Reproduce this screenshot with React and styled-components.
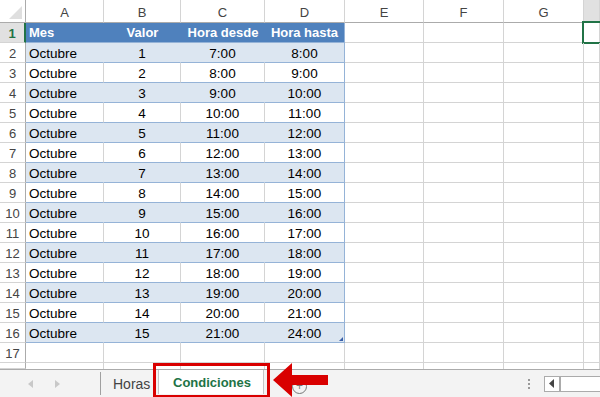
import React from 'react';
import styled, { createGlobalStyle, css } from 'styled-components';

const GlobalStyle = createGlobalStyle`
  html, body { margin: 0; padding: 0; background: #fff; }
  body { font-family: "Liberation Sans", Arial, sans-serif; }
`;

const widths = [26, 78, 77, 84, 80, 79, 80, 80, 16];
const letters = ['A', 'B', 'C', 'D', 'E', 'F', 'G', ''];

const rows = Array.from({ length: 15 }, (_, i) => {
  const v = i + 1;
  const from = v === 15 ? 21 : v + 6;
  const to = v === 15 ? 24 : v + 7;
  return ['Octubre', String(v), `${from}:00`, `${to}:00`];
});

const App = () => (
  <Page>
    <GlobalStyle />
    <Sheet>
      <Row $height={23}>
        <Corner $w={widths[0]}>
          <CornerMark />
        </Corner>
        {letters.map((l, i) => (
          <ColHead key={i} $w={widths[i + 1]} $active={i === 7}>
            {l}
          </ColHead>
        ))}
      </Row>

      <Row $height={20}>
        <RowHead $w={widths[0]} $active>1</RowHead>
        {['Mes', 'Valor', 'Hora desde', 'Hora hasta'].map((h, i) => (
          <HeadCell key={h} $w={widths[i + 1]} $align={i === 0 ? 'left' : 'center'} $last={i === 3}>
            {h}
          </HeadCell>
        ))}
        <Cell $w={widths[5]} />
        <Cell $w={widths[6]} />
        <Cell $w={widths[7]} />
        <Cell $w={widths[8]}>
          <Selection />
        </Cell>
      </Row>

      {rows.map((r, ri) => (
        <Row key={ri} $height={20}>
          <RowHead $w={widths[0]}>{ri + 2}</RowHead>
          {r.map((val, ci) => (
            <DataCell
              key={ci}
              $w={widths[ci + 1]}
              $band={ri % 2 === 0}
              $align={ci === 0 ? 'left' : 'center'}
              $last={ci === 3}
            >
              {val}
              {ci === 3 && ri === rows.length - 1 && <ResizeHandle />}
            </DataCell>
          ))}
          {widths.slice(5).map((w, i) => (
            <Cell key={i} $w={w} />
          ))}
        </Row>
      ))}

      <Row $height={20}>
        <RowHead $w={widths[0]}>17</RowHead>
        {widths.slice(1).map((w, i) => (
          <Cell key={i} $w={w} />
        ))}
      </Row>
      <Row $height={6}>
        <RowHead $w={widths[0]} />
        {widths.slice(1).map((w, i) => (
          <Cell key={i} $w={w} $noBottom />
        ))}
      </Row>
    </Sheet>

    <TabBar>
      <NavArrows>
        <NavArrow $dir="left" />
        <NavArrow $dir="right" />
      </NavArrows>
      <TabSep />
      <Tab>Horas</Tab>
      <ActiveTab>Condiciones</ActiveTab>
      <AddButton>+</AddButton>
      <Spacer />
      <Dots>
        <span />
        <span />
        <span />
      </Dots>
      <ScrollBar>
        <ScrollBtn>
          <svg width="6" height="9" viewBox="0 0 6 9">
            <path d="M5 0 L0 4.5 L5 9 Z" fill="#444" />
          </svg>
        </ScrollBtn>
      </ScrollBar>
      <Highlight />
      <Arrow viewBox="0 0 56 34" width="56" height="34">
        <path d="M0 17 L19 0 L19 12 L55 12 L55 22 L19 22 L19 34 Z" fill="#d90000" />
      </Arrow>
    </TabBar>
  </Page>
);

export default App;

const Page = styled.div`
  width: 600px;
  height: 397px;
  display: flex;
  flex-direction: column;
  overflow: hidden;
  background: #fff;
`;

const Sheet = styled.div`
  display: flex;
  flex-direction: column;
  height: 369px;
  overflow: hidden;
`;

const Row = styled.div`
  display: flex;
  height: ${({ $height }) => $height}px;
  flex-shrink: 0;
`;

const baseCell = css`
  box-sizing: border-box;
  width: ${({ $w }) => $w}px;
  flex-shrink: 0;
  height: 100%;
  position: relative;
`;

const Corner = styled.div`
  ${baseCell};
  border-right: 1px solid #ababab;
  border-bottom: 1px solid #ababab;
  background: #fff;
`;

const CornerMark = styled.div`
  position: absolute;
  right: 3px;
  bottom: 3px;
  width: 0;
  height: 0;
  border-left: 13px solid transparent;
  border-bottom: 13px solid #dfdfdf;
`;

const ColHead = styled.div`
  ${baseCell};
  display: flex;
  align-items: center;
  justify-content: center;
  font-size: 13px;
  color: #444;
  background: ${({ $active }) => ($active ? '#e1e1e1' : '#fff')};
  border-right: 1px solid #d4d4d4;
  border-bottom: 1px solid #ababab;
  padding-top: 2px;
`;

const RowHead = styled.div`
  ${baseCell};
  display: flex;
  align-items: center;
  justify-content: center;
  font-size: 13px;
  color: ${({ $active }) => ($active ? '#217346' : '#444')};
  font-weight: ${({ $active }) => ($active ? 700 : 400)};
  background: ${({ $active }) => ($active ? '#e1e1e1' : '#fff')};
  border-right: ${({ $active }) => ($active ? '2px solid #217346' : '1px solid #ababab')};
  border-bottom: 1px solid #d4d4d4;
  padding-top: 1px;
`;

const Cell = styled.div`
  ${baseCell};
  border-right: 1px solid #d4d4d4;
  border-bottom: ${({ $noBottom }) => ($noBottom ? 'none' : '1px solid #d4d4d4')};
`;

const Selection = styled.div`
  position: absolute;
  top: -2px;
  left: -2px;
  right: -6px;
  bottom: -2px;
  border: 2px solid #217346;
`;

const HeadCell = styled.div`
  ${baseCell};
  background: #4f81bd;
  color: #fff;
  font-weight: 700;
  font-size: 13px;
  line-height: 20px;
  padding: 0 3px;
  text-align: ${({ $align }) => $align};
  white-space: nowrap;
  border-bottom: 1px solid #95b3d7;
  border-right: ${({ $last }) => ($last ? '1px solid #95b3d7' : 'none')};
`;

const DataCell = styled.div`
  ${baseCell};
  background: ${({ $band }) => ($band ? '#dce6f1' : '#fff')};
  color: #000;
  font-size: 13.5px;
  line-height: 20px;
  padding: 1px 3px 0;
  text-align: ${({ $align }) => $align};
  white-space: nowrap;
  border-bottom: 1px solid #95b3d7;
  border-right: 1px solid
    ${({ $last, $band }) => ($last ? '#95b3d7' : $band ? '#dce6f1' : '#d4d4d4')};
`;

const ResizeHandle = styled.div`
  position: absolute;
  right: 1px;
  bottom: 1px;
  width: 0;
  height: 0;
  border-left: 4px solid transparent;
  border-bottom: 4px solid #3a5fa8;
`;

const TabBar = styled.div`
  position: relative;
  flex: 1;
  display: flex;
  align-items: center;
  background: #f3f3f3;
  border-top: 1px solid #ababab;
  box-sizing: border-box;
`;

const NavArrows = styled.div`
  display: flex;
  align-items: center;
  gap: 22px;
  padding-left: 28px;
  width: 100px;
  box-sizing: border-box;
`;

const NavArrow = styled.div`
  width: 0;
  height: 0;
  border-top: 4px solid transparent;
  border-bottom: 4px solid transparent;
  ${({ $dir }) =>
    $dir === 'left'
      ? 'border-right: 5px solid #c8c8c8;'
      : 'border-left: 5px solid #c8c8c8;'}
`;

const TabSep = styled.div`
  width: 1px;
  height: 23px;
  background: #a0a0a0;
`;

const Tab = styled.div`
  font-size: 14px;
  color: #444;
  padding: 0 12px;
  width: 57px;
  box-sizing: border-box;
`;

const ActiveTab = styled.div`
  align-self: stretch;
  margin-bottom: 3px;
  display: flex;
  align-items: center;
  padding: 0 12px 0 14px;
  background: #fff;
  color: #217346;
  font-weight: 700;
  font-size: 13px;
  border-left: 1px solid #c6c6c6;
  border-right: 1px solid #c6c6c6;
`;

const AddButton = styled.div`
  width: 13px;
  height: 13px;
  margin-left: 28px;
  margin-top: 6px;
  border: 1px solid #777;
  border-radius: 50%;
  font-size: 12px;
  line-height: 13px;
  text-align: center;
  color: #777;
`;

const Spacer = styled.div`
  flex: 1;
`;

const Dots = styled.div`
  display: flex;
  flex-direction: column;
  gap: 2px;
  margin-right: 14px;
  span {
    width: 2px;
    height: 2px;
    background: #999;
  }
`;

const ScrollBar = styled.div`
  width: 60px;
  height: 16px;
  margin-right: -4px;
  border: 1px solid #ababab;
  background: #fff;
  display: flex;
  box-sizing: border-box;
`;

const ScrollBtn = styled.div`
  width: 14px;
  display: flex;
  align-items: center;
  justify-content: center;
  border-right: 2px solid #ababab;
  background: #fff;
`;

const Highlight = styled.div`
  position: absolute;
  left: 153px;
  top: -7px;
  width: 117px;
  height: 35px;
  border: 3px solid #d90000;
  box-sizing: border-box;
  pointer-events: none;
`;

const Arrow = styled.svg`
  position: absolute;
  left: 273px;
  top: -7px;
`;
